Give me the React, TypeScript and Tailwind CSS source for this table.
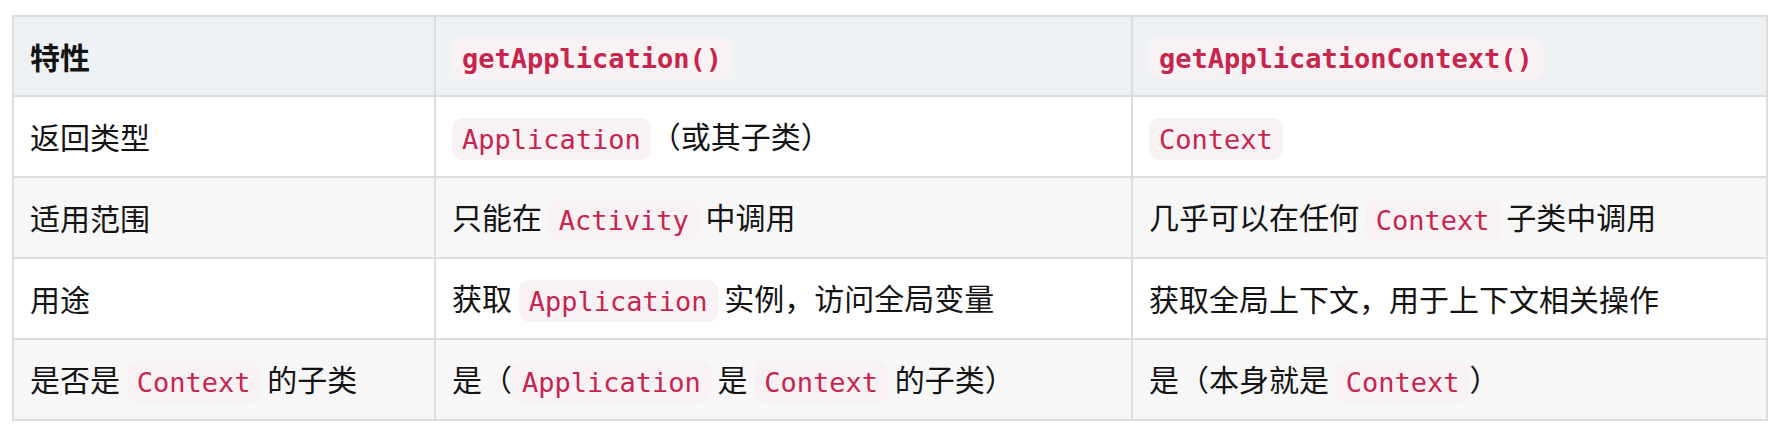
import React from "react";

const C = ({ children, bold }: { children: React.ReactNode; bold?: boolean }) => (
  <code
    className={`rounded-[10px] bg-[#f9f2f4] px-[10px] py-[5.5px] text-[27px] text-[#c7254e] ${bold ? "font-bold" : "font-normal"}`}
    style={{ fontFamily: '"DejaVu Sans Mono", "Liberation Mono", monospace' }}
  >
    {children}
  </code>
);

type Cell = React.ReactNode;

const rows: Cell[][] = [
  [<>返回类型</>, <><C>Application</C>（或其子类）</>, <><C>Context</C></>],
  [<>适用范围</>, <>只能在 <C>Activity</C> 中调用</>, <>几乎可以在任何 <C>Context</C> 子类中调用</>],
  [<>用途</>, <>获取 <C>Application</C> 实例，访问全局变量</>, <>获取全局上下文，用于上下文相关操作</>],
  [<>是否是 <C>Context</C> 的子类</>, <>是（<C>Application</C> 是 <C>Context</C> 的子类）</>, <>是（本身就是 <C>Context</C>）</>],
];

export default function App() {
  return (
    <div
      className="min-h-[431px] w-full bg-white pl-[12px] pt-[15px] text-[30px] text-[#141414]"
      style={{ fontFamily: '"Noto Sans CJK SC", "Noto Sans", sans-serif' }}
    >
      <div className="grid w-[1756px] grid-cols-[422px_697px_1fr] border-2 border-[#dddddd]">
        {/* header */}
        <div className="flex h-[80px] items-center border-b-2 border-r-2 border-[#dddddd] bg-[#eff2f5] px-4 font-bold">
          <div>特性</div>
        </div>
        <div className="flex h-[80px] items-center border-b-2 border-r-2 border-[#dddddd] bg-[#eff2f5] px-4">
          <div>
            <C bold>getApplication()</C>
          </div>
        </div>
        <div className="flex h-[80px] items-center border-b-2 border-[#dddddd] bg-[#eff2f5] px-4">
          <div>
            <C bold>getApplicationContext()</C>
          </div>
        </div>
        {rows.map((r, i) => {
          const last = i === rows.length - 1;
          const bg = i % 2 === 1 ? "bg-[#f7f7f7]" : "bg-white";
          const h = last ? "h-[78.5px]" : "h-[81px] border-b-2";
          return r.map((c, j) => (
            <div
              key={`${i}-${j}`}
              className={`flex items-center border-[#dddddd] px-4 ${bg} ${h} ${j < 2 ? "border-r-2" : ""}`}
            >
              <div className="whitespace-nowrap">{c}</div>
            </div>
          ));
        })}
      </div>
    </div>
  );
}
